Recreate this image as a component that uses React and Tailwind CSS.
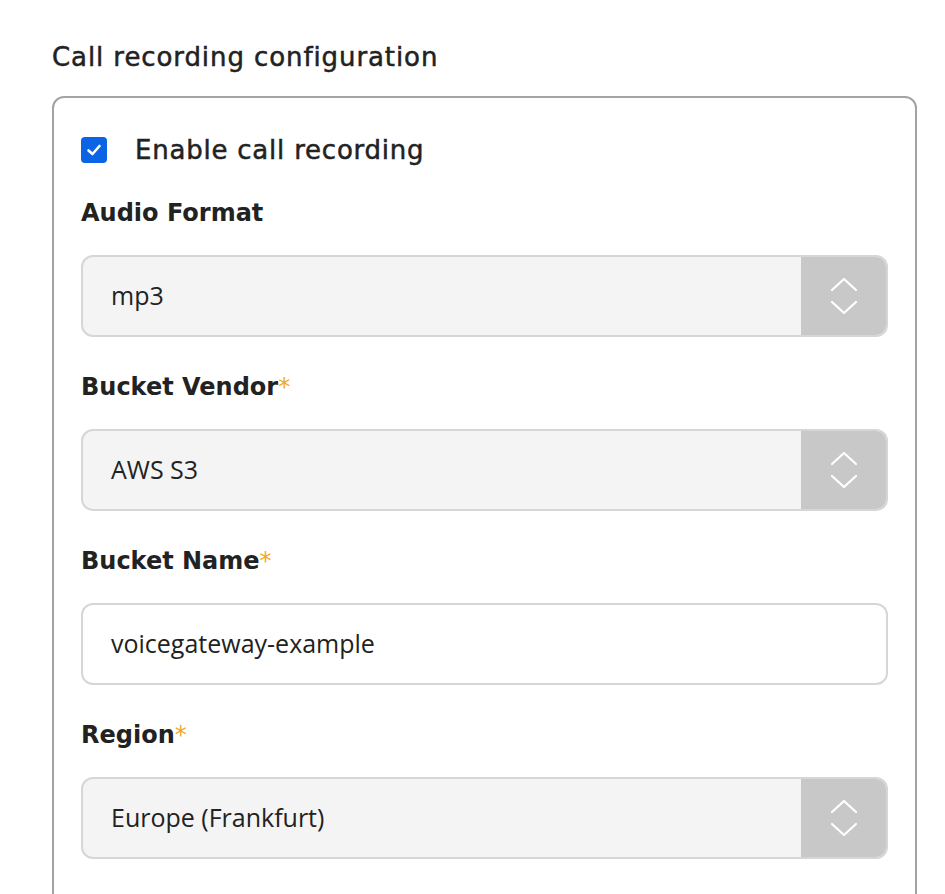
import React, { useState } from 'react';

const labelFont = { fontFamily: '"DejaVu Sans", "Noto Sans", sans-serif' };

const Chevrons = () => (
  <svg width="30" height="44" viewBox="0 0 30 44" fill="none" stroke="white" strokeWidth="2.2" strokeLinecap="round" strokeLinejoin="round">
    <path d="M3 16 L15 5 L27 16" />
    <path d="M3 28 L15 39 L27 28" />
  </svg>
);

const Label = ({ text, required }) => (
  <p className="text-[24px] font-bold text-[#222] leading-none" style={labelFont}>
    {text}
    {required && <span className="text-[#f5a623] font-normal">*</span>}
  </p>
);

const SelectBox = ({ value }) => (
  <div className="flex h-[82px] rounded-[12px] border-2 border-[#d6d6d6] bg-[#f4f4f4] overflow-hidden">
    <div className="flex-1 flex items-center pl-[28px] text-[25px] text-[#222] font-['Open_Sans',sans-serif]">
      {value}
    </div>
    <div className="w-[85px] bg-[#c8c8c8] flex items-center justify-center">
      <Chevrons />
    </div>
  </div>
);

const App = () => {
  const [enabled, setEnabled] = useState(true);

  return (
    <div className="bg-white min-h-[894px] w-[945px] overflow-hidden pl-[52px] pt-[44px]">
      <h2 className="text-[26px] font-normal tracking-[0.035em] text-[#222] leading-none mb-[26px] [-webkit-text-stroke:0.5px_#222]" style={labelFont}>
        Call recording configuration
      </h2>

      <div className="w-[865px] h-[820px] border-2 border-[#a3a3a3] rounded-[12px] px-[27px] pt-[39px]">
        <label className="flex items-center gap-[28px] cursor-pointer">
          <span
            onClick={() => setEnabled(!enabled)}
            className={`w-[26px] h-[26px] rounded-[4px] flex items-center justify-center ${enabled ? 'bg-[#0b63e5]' : 'bg-white border-2 border-gray-400'}`}
          >
            {enabled && (
              <svg width="18" height="18" viewBox="0 0 18 18" fill="none" stroke="white" strokeWidth="2.6" strokeLinecap="round" strokeLinejoin="round">
                <path d="M3.5 9.5 L7.5 13 L14.5 5" />
              </svg>
            )}
          </span>
          <span className="text-[26px] font-normal tracking-[0.03em] text-[#222] leading-none [-webkit-text-stroke:0.5px_#222]" style={labelFont}>
            Enable call recording
          </span>
        </label>

        <div className="mt-[38px]">
          <Label text="Audio Format" />
          <div className="mt-[30px]">
            <SelectBox value="mp3" />
          </div>
        </div>

        <div className="mt-[38px]">
          <Label text="Bucket Vendor" required />
          <div className="mt-[30px]">
            <SelectBox value="AWS S3" />
          </div>
        </div>

        <div className="mt-[38px]">
          <Label text="Bucket Name" required />
          <div className="mt-[30px]">
            <div className="h-[82px] rounded-[12px] border-2 border-[#d6d6d6] bg-white flex items-center pl-[28px] text-[25px] text-[#222] font-['Open_Sans',sans-serif]">
              voicegateway-example
            </div>
          </div>
        </div>

        <div className="mt-[38px]">
          <Label text="Region" required />
          <div className="mt-[30px]">
            <SelectBox value="Europe (Frankfurt)" />
          </div>
        </div>
      </div>
    </div>
  );
};

export default App;
